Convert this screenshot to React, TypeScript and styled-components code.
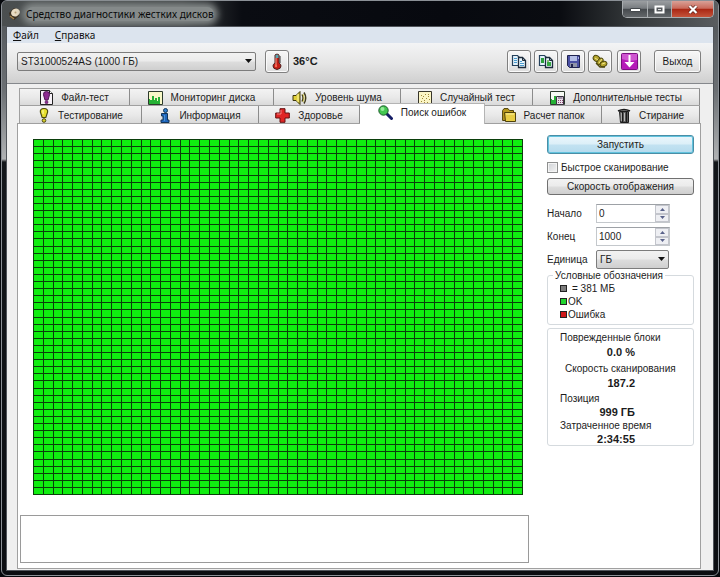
import React, { useState } from "react";
import styled, { createGlobalStyle, css } from "styled-components";

const GlobalStyle = createGlobalStyle`
  *, *::before, *::after { box-sizing: border-box; }
  html, body { margin: 0; padding: 0; background: #07090d; }
  body, button, input, select, legend {
    font-family: "Liberation Sans", Arial, sans-serif;
    font-size: 10px;
    color: #1c1c1c;
  }
`;

const Desktop = styled.div`
  display: flex;
  min-height: 100vh;
  padding: 0 1px 1px;
`;

const Window = styled.div`
  flex: 1;
  display: flex;
  flex-direction: column;
  min-width: 0;
  padding: 0 4px 4px;
  border: 1px solid #8b9096;
  border-radius: 6px;
  background: linear-gradient(#4e5256 0, #6c7074 90px, #b0b2b4 158px, #14171b 161px, #0b0d11 100%);
`;

const TitleBar = styled.header`
  display: flex;
  align-items: flex-start;
  height: 25px;
  margin: 0 -4px;
  padding-left: 7px;
  border-radius: 5px 5px 0 0;
  background: linear-gradient(90deg, #4b4f50 0, #3a3e3f 180px, #0a0c12 240px, #07090f 62%, #0a0c11 78%, #34383a 88%, #5a5d60 100%);
`;

const Title = styled.h1`
  flex: 1;
  display: flex;
  align-items: center;
  gap: 5px;
  height: 25px;
  margin: 0;
  font: 400 10px/14px "Noto Sans", "Open Sans", sans-serif;
  color: #0a0a0a;
`;

const TitleText = styled.span`
  white-space: nowrap;
  background: #858a8a;
  border-radius: 8px;
  box-shadow: 0 0 7px 4px #858a8a;
`;

const Caption = styled.div`
  display: flex;
  height: 17px;
  margin-right: 4px;
  border: 1px solid #a9adb0;
  border-top: 0;
  border-radius: 0 0 5px 5px;
  overflow: hidden;
`;

const CaptionButton = styled.button<{ $close?: boolean }>`
  display: flex;
  align-items: center;
  justify-content: center;
  width: ${(p) => (p.$close ? 42 : 24)}px;
  padding: 0;
  border: 0;
  background: ${(p) =>
    p.$close
      ? "linear-gradient(#d9a197 0, #c9695a 46%, #a92613 50%, #c4533a 100%)"
      : "linear-gradient(#9b9ea1 0, #777b7f 46%, #45494d 50%, #63676a 100%)"};
  & + & { border-left: 1px solid #a9adb0; }
`;

const Client = styled.div`
  flex: 1;
  display: flex;
  flex-direction: column;
  border: 1px solid #50545a;
  background: #f0f0f0;
`;

const MenuBar = styled.nav`
  display: flex;
  gap: 16px;
  height: 16px;
  padding-left: 6px;
  background: #dce4ee;
`;

const MenuItem = styled.button`
  padding: 0;
  border: 0;
  background: none;
  font: 400 10px/16px "Noto Sans", "Open Sans", sans-serif;
  color: #111;
`;

const Toolbar = styled.div`
  display: flex;
  align-items: center;
  height: 41px;
  padding: 0 12px 4px 10px;
  border-bottom: 1px solid #85888c;
  background: linear-gradient(#f3f4f5, #e6e6e6 50%, #cfcfcf);
`;

const SelectBox = styled.div<{ $width: number }>`
  position: relative;
  width: ${(p) => p.$width}px;
  height: 19px;
  & > svg {
    position: absolute;
    right: 4px;
    top: 7px;
    pointer-events: none;
  }
`;

const Select = styled.select`
  appearance: none;
  width: 100%;
  height: 100%;
  padding: 0 14px 0 3px;
  border: 1px solid #7c7c7c;
  border-radius: 2px;
  background: linear-gradient(#f2f2f2 0, #ebebeb 48%, #dddddd 52%, #cfcfcf 100%);
`;

const ToolButton = styled.button<{ $wide?: boolean }>`
  display: flex;
  align-items: center;
  justify-content: center;
  width: ${(p) => (p.$wide ? 47 : 24)}px;
  height: 23px;
  padding: 0;
  border: 1px solid #808080;
  border-radius: 3px;
  background: linear-gradient(#f7f7f7, #ececec 50%, #dcdcdc);
  box-shadow: inset 0 0 0 1px #fafafa;
`;

const Temperature = styled.span`
  flex: 1;
  margin-left: 4px;
  font-size: 11px;
  font-weight: 700;
`;

const ToolGroup = styled.div`
  display: flex;
  gap: 3px;
`;

const Spacer = styled.span<{ $w: number }>`
  flex: none;
  width: ${(p) => p.$w}px;
`;

const Body = styled.main`
  flex: 1;
  display: flex;
  flex-direction: column;
  padding: 4px 12px 1px 10px;
  background: #efefef;
`;

const TabRow = styled.div<{ $cols: string }>`
  display: grid;
  grid-template-columns: ${(p) => p.$cols};
  height: 18px;
  margin: 0 1px 0 2px;
  border-top: 1px solid #a0a0a0;
  border-left: 1px solid #a0a0a0;
  & + & { margin-top: -1px; }
`;

const Tab = styled.button<{ $active?: boolean }>`
  display: flex;
  align-items: center;
  justify-content: center;
  gap: 8px;
  min-width: 0;
  padding: 0;
  white-space: nowrap;
  border: 0;
  border-right: 1px solid #8c8c8c;
  background: linear-gradient(#f3f3f3, #e9e9e9 50%, #d8d8d8);
  ${(p) =>
    p.$active &&
    css`
      z-index: 1;
      height: 21px;
      margin-top: -3px;
      padding-bottom: 3px;
      border-top: 1px solid #a0a0a0;
      border-color: #b4b4b4;
      background: #fff;
    `}
`;

const Panel = styled.section`
  flex: 1;
  display: grid;
  grid-template-columns: minmax(0, 1fr) 147px;
  gap: 18px;
  padding: 11px 6px 5px 2px;
  border: 1px solid #a0a0a0;
  background: #fff;
`;

const ScanColumn = styled.div`
  display: flex;
  flex-direction: column;
  gap: 20px;
`;

const MapFrame = styled.div`
  flex: 1;
  display: flex;
  min-height: 200px;
  margin: 4px 6px 0 13px;
  border: 1px solid #0b3f0b;
  border-width: 0 1px 1px 0;
  & > svg { flex: 1; min-width: 0; }
`;

const Log = styled.div`
  height: 48px;
  border: 1px solid #9a9a9a;
`;

const Side = styled.aside`
  display: flex;
  flex-direction: column;
`;

const PushButton = styled.button<{ $primary?: boolean }>`
  height: ${(p) => (p.$primary ? 19 : 17)}px;
  padding: 0;
  border: 1px solid #707070;
  border-radius: 3px;
  background: linear-gradient(#f2f2f2 0, #ebebeb 48%, #dddddd 52%, #cfcfcf 100%);
  ${(p) =>
    p.$primary &&
    css`
      border: 1px solid #4a8ea6;
      box-shadow: inset 0 0 0 1px #62c3de;
      background: linear-gradient(#eaf6fc 0, #dceff8 48%, #c2e2f1 52%, #b5dbee 100%);
    `}
`;

const CheckRow = styled.label`
  display: flex;
  align-items: center;
  gap: 3px;
  height: 14px;
  margin: 6px 0 4px;
  white-space: nowrap;
`;

const CheckBox = styled.input`
  appearance: none;
  width: 11px;
  height: 11px;
  margin: 0;
  border: 1px solid #8e8f8f;
  background: linear-gradient(135deg, #cfd2d6, #f4f4f4);
  box-shadow: inset 0 0 0 1px #f4f4f4;
  &:checked { background: #3b6ea5; }
`;

const Fields = styled.div`
  display: grid;
  grid-template-columns: 49px 74px;
  row-gap: 4px;
  align-items: center;
  margin-top: 9px;
`;

const SpinBox = styled.div`
  display: flex;
  height: 19px;
  border: 1px solid #c4c8cc;
  border-top-color: #9da1a6;
`;

const SpinInput = styled.input`
  flex: 1;
  min-width: 0;
  padding: 0 2px;
  border: 0;
  background: #fff;
  outline: 0;
`;

const SpinButtons = styled.div`
  display: grid;
  width: 14px;
`;

const SpinButton = styled.button`
  display: flex;
  align-items: center;
  justify-content: center;
  padding: 0;
  border: 1px solid #c3c5cc;
  background: #eeeff3;
`;

const Legend = styled.fieldset`
  margin: 0;
  padding: 0 0 3px 12px;
  border: 1px solid #d5dade;
  border-radius: 3px;
  & > legend {
    margin-left: -7px;
    padding: 0 2px;
    line-height: 13px;
  }
`;

const LegendItem = styled.div<{ $gap?: boolean }>`
  display: flex;
  align-items: center;
  gap: ${(p) => (p.$gap ? 5 : 1)}px;
  height: 13px;
  line-height: 13px;
`;

const Swatch = styled.span<{ $color: string }>`
  width: 7px;
  height: 7px;
  border: 1px solid #222;
  background: ${(p) => p.$color};
`;

const Stats = styled.dl`
  margin: 3px 0 0;
  padding: 1px 0 0;
  border: 1px solid #d5dade;
  border-radius: 3px;
`;

const Stat = styled.div<{ $tight?: boolean; $indent?: boolean }>`
  padding: 0 58px 1px ${(p) => (p.$indent ? 17 : 12)}px;
  &:last-child { padding-bottom: 0; }
  dt {
    line-height: ${(p) => (p.$tight ? 14 : 15)}px;
    white-space: nowrap;
  }
  dd {
    margin: 0;
    line-height: ${(p) => (p.$tight ? 12 : 15)}px;
    font-size: 11px;
    font-weight: 700;
    text-align: right;
    white-space: nowrap;
  }
`;

const Arrow = () => (
  <svg width="7" height="4" viewBox="0 0 7 4" aria-hidden="true">
    <path d="M0 0h7L3.500 4z" fill="#111" />
  </svg>
);

const DiskIcon = () => (
  <svg width="12" height="12" viewBox="0 0 12 12" aria-hidden="true">
    <path d="M0 5 5 0l6 2-1 6-5 4-4-3z" fill="#3a2f22" />
    <ellipse cx="6.500" cy="4.500" rx="4.500" ry="3.800" fill="#e9dcc4" transform="rotate(-25 6.500 4.500)" />
    <circle cx="6.500" cy="4.500" r="1" fill="#b39c74" />
    <path d="M1 8l4 3" stroke="#a5834d" strokeWidth="1.500" />
  </svg>
);

const ThermometerIcon = () => (
  <svg width="12" height="17" viewBox="0 0 12 17" aria-hidden="true">
    <path d="M4 2q2-2 4 0v8q2 1 2 3 0 3-4 3.500Q2 16 2 13q0-2 2-3z" fill="#c51d14" stroke="#4b2020" />
    <path d="M4.500 2q1.500-1 3 0v3h-3z" fill="#5aa5b0" />
    <path d="M5 5v7" stroke="#f0a090" />
    <path d="M9 3v7" stroke="#333" />
    <circle cx="5" cy="13" r="1.200" fill="#f26a58" />
  </svg>
);

const CopyIcon = ({ green }: { green?: boolean }) => (
  <svg width="16" height="15" viewBox="0 0 16 15" aria-hidden="true">
    <path d="M1.500 1.500h5l2 2v8h-7z" fill="#e2f1fa" stroke="#25415c" strokeWidth="1.200" />
    <path d="M7.500 3.500h4l3 3v7h-7z" fill="#eaf6fc" stroke="#1d2c3c" strokeWidth="1.300" />
    <path d="M11.500 3.500v3h3" fill="none" stroke="#1d2c3c" />
    {green ? (
      <>
        <path d="M3 4h3v5H3z" fill="#2b9f3c" />
        <path d="M9 8h4v4H9z" fill="#35a843" />
        <path d="M9 6h2v2H9z" fill="#87ba78" />
      </>
    ) : (
      <path d="M3 4.500h3M3 6.500h3M3 8.500h3M9 7.500h2M9 9.500h4M9 11.500h4" stroke="#4a9bce" />
    )}
  </svg>
);

const SaveIcon = () => (
  <svg width="15" height="15" viewBox="0 0 15 15" aria-hidden="true">
    <path d="M1.500 1.500h12v12h-10l-2-2z" fill="#4a50a3" stroke="#20234f" />
    <path d="M4 2h7v5H4z" fill="#b5bfe6" />
    <path d="M4 9h7v4H4z" fill="#8f94a8" />
    <path d="M5 10h2v3H5z" fill="#20234f" />
    <path d="M12.500 3v2" stroke="#a9afe5" />
  </svg>
);

const ChainIcon = () => (
  <svg width="16" height="15" viewBox="0 0 16 15" aria-hidden="true">
    <g stroke="#4d470c" strokeWidth="1" fill="#b5a52c">
      <ellipse cx="4.500" cy="4.500" rx="3.500" ry="2.800" transform="rotate(35 4.500 4.500)" />
      <ellipse cx="8" cy="7.500" rx="3.800" ry="2.400" transform="rotate(-50 8 7.500)" />
      <ellipse cx="11.500" cy="10" rx="3.500" ry="2.600" transform="rotate(-20 11.500 10)" />
    </g>
    <path d="M3 4l3 2M7 9l3-4M10 10l3-1" stroke="#f1e68a" />
    <path d="M4 9l4 4 5 0" fill="none" stroke="#4d470c" strokeWidth="1.300" />
  </svg>
);

const DownIcon = () => (
  <svg width="17" height="17" viewBox="0 0 17 17" aria-hidden="true">
    <rect x=".5" y=".5" width="16" height="16" rx="1" fill="#b51cb8" stroke="#7a0f80" />
    <path d="M1 1h15v6Q8 9 1 6z" fill="#cf55d0" />
    <path d="M8.500 2v9" stroke="#fff" strokeWidth="2" />
    <path d="M3.500 9h10l-5 5.500z" fill="#fff" />
  </svg>
);

const exclamationPath = "M6 0Q9.500 0 9 3.500L7.500 9h-3L3 3.500Q2.500 0 6 0z";

const FileTestIcon = () => (
  <svg width="13" height="15" viewBox="0 0 13 15" aria-hidden="true">
    <path d="M.5.5h9l3 3v11H.5z" fill="#f7f2f8" stroke="#222" />
    <path d="M9.500.5v3h3" fill="#fff" stroke="#222" />
    <path d={exclamationPath} transform="translate(.5 1.500) scale(1 .95)" fill="#8d2b91" stroke="#4c1551" />
    <circle cx="6.500" cy="12.200" r="1.500" fill="#8d2b91" stroke="#4c1551" strokeWidth=".6" />
  </svg>
);

const ChartIcon = ({ calc }: { calc?: boolean }) => (
  <svg width="15" height="14" viewBox="0 0 15 14" aria-hidden="true">
    <path d="M.5.5h14v13H.5z" fill={calc ? "#f7fbf4" : "#f8f8c8"} stroke="#2c3a2c" />
    <path d="M1 13V8h1v1h2V5h2v4h1V7h2v3h1V6h2v7z" fill="#25b135" />
    {calc && (
      <>
        <path d="M6.500 5.500h7v8h-7z" fill="#e9dfe9" stroke="#3a3340" />
        <path d="M8 7h4.500" stroke="#5a4a66" />
        <path d="M8 9.500h5M8 11.500h5" stroke="#8a4a70" strokeDasharray="1 1" />
      </>
    )}
  </svg>
);

const SpeakerIcon = () => (
  <svg width="15" height="14" viewBox="0 0 15 14" aria-hidden="true">
    <path d="M1 4.500h3l4-4v13l-4-4H1z" fill="#e0cf3a" stroke="#3c370c" />
    <path d="M6 3v8" stroke="#fff8a0" />
    <path d="M10 3.500q2 3.500 0 7M12 1.500q3.500 5.500 0 11" fill="none" stroke="#3f3b1c" strokeWidth="1.400" />
    <path d="M11 3q2.500 4 0 8" fill="none" stroke="#d9c93d" strokeWidth=".8" />
  </svg>
);

const RandomIcon = () => (
  <svg width="14" height="14" viewBox="0 0 14 14" aria-hidden="true">
    <path d="M.5.5h13v13H.5z" fill="#fbf5c4" stroke="#37352a" />
    <path d="M3 4.500h1M7 3.500h1M10 5.500h1M4 7.500h1M8 7.500h1M11 8.500h1M3 10.500h1M6 9.500h1M9 11.500h1M6 11.500h1M5 5.500h1M10 3.500h1" stroke="#a08a3a" />
  </svg>
);

const TestIcon = () => (
  <svg width="12" height="15" viewBox="0 0 12 15" aria-hidden="true">
    <path d={exclamationPath} transform="translate(-1.200 .6) scale(1.200 1)" fill="#e6e02c" stroke="#4d4a10" />
    <path d="M5 2v4" stroke="#fdfbb4" />
    <circle cx="6" cy="12.500" r="1.800" fill="#d8d02a" stroke="#4d4a10" />
  </svg>
);

const InfoIcon = () => (
  <svg width="12" height="15" viewBox="0 0 12 15" aria-hidden="true">
    <circle cx="6.500" cy="2.500" r="2" fill="#2f7fd0" stroke="#123559" />
    <path d="M2.500 5.500h6v6.500h1.500v2.500h-8V12H4V8H2.500z" fill="#1f66bd" stroke="#123559" />
    <path d="M5.500 7v6" stroke="#4a92d6" />
  </svg>
);

const HealthIcon = () => (
  <svg width="15" height="15" viewBox="0 0 15 15" aria-hidden="true">
    <path d="M5 .7h5V5h4.300v5H10v4.300H5V10H.7V5H5z" fill="#e02626" stroke="#641010" />
    <path d="M6 2v4H2" fill="none" stroke="#f58080" />
  </svg>
);

const SearchIcon = () => (
  <svg width="15" height="15" viewBox="0 0 15 15" aria-hidden="true">
    <path d="M8.500 8.500l5 5" stroke="#141c66" strokeWidth="3" strokeLinecap="round" />
    <circle cx="5.500" cy="5.500" r="4.700" fill="#43c750" stroke="#1c5a2a" />
    <circle cx="4.500" cy="4" r="2" fill="#93eb98" />
  </svg>
);

const FolderIcon = () => (
  <svg width="14" height="14" viewBox="0 0 14 14" aria-hidden="true">
    <path d="M.6 2.500 2 .6h4l1.500 1.900h4v10H.6z" fill="#b99a1e" stroke="#4f410b" />
    <path d="M2.500 4.500h11v9h-10z" fill="#e7cd45" stroke="#4f410b" />
    <path d="M4 6h8" stroke="#fbf0a0" />
  </svg>
);

const TrashIcon = () => (
  <svg width="14" height="15" viewBox="0 0 14 15" aria-hidden="true">
    <path d="M2.500 3.500h9v11h-8z" fill="#666" stroke="#1c1c1c" />
    <path d="M1 3q6-3 12 0" fill="#888" stroke="#1c1c1c" strokeWidth="1.500" />
    <path d="M5.500 4v10M9.500 4v10" stroke="#1c1c1c" strokeWidth="1.400" />
    <path d="M4.300 5v8M7.500 5v8" stroke="#b9b9b9" />
  </svg>
);

const COLS = 50;
const ROWS = 50;
const range = (n: number) => Array.from({ length: n }, (_, i) => i);

const BlockMap = () => (
  <svg role="img" aria-label="Карта блоков">
    <rect width="100%" height="100%" fill="#10ee10" />
    <g fill="#0b3f0b" shapeRendering="crispEdges">
      {range(COLS).map((i) => (
        <rect key={`c${i}`} x={`${(i * 100) / COLS}%`} width="1" height="100%" />
      ))}
      {range(ROWS).map((i) => (
        <rect key={`r${i}`} y={`${(i * 100) / ROWS}%`} width="100%" height="1" />
      ))}
    </g>
  </svg>
);

const topTabs = [
  { label: "Файл-тест", icon: <FileTestIcon /> },
  { label: "Мониторинг диска", icon: <ChartIcon /> },
  { label: "Уровень шума", icon: <SpeakerIcon /> },
  { label: "Случайный тест", icon: <RandomIcon /> },
  { label: "Дополнительные тесты", icon: <ChartIcon calc /> },
];

const bottomTabs = [
  { label: "Тестирование", icon: <TestIcon /> },
  { label: "Информация", icon: <InfoIcon /> },
  { label: "Здоровье", icon: <HealthIcon /> },
  { label: "Поиск ошибок", icon: <SearchIcon />, active: true },
  { label: "Расчет папок", icon: <FolderIcon /> },
  { label: "Стирание", icon: <TrashIcon /> },
];

const stats = [
  { label: "Поврежденные блоки", value: "0.0 %" },
  { label: "Скорость сканирования", value: "187.2", indent: true },
  { label: "Позиция", value: "999 ГБ", tight: true },
  { label: "Затраченное время", value: "2:34:55", tight: true },
];

const Spin = ({ id, initial }: { id: string; initial: number }) => {
  const [value, setValue] = useState(initial);
  return (
    <SpinBox>
      <SpinInput id={id} value={value} onChange={(e) => setValue(Number(e.target.value) || 0)} />
      <SpinButtons>
        <SpinButton type="button" aria-label="Больше" onClick={() => setValue(value + 1)}>
          <svg width="5" height="3" viewBox="0 0 5 3"><path d="M0 3h5L2.500 0z" fill="#59628a" /></svg>
        </SpinButton>
        <SpinButton type="button" aria-label="Меньше" onClick={() => setValue(value - 1)}>
          <svg width="5" height="3" viewBox="0 0 5 3"><path d="M0 0h5L2.500 3z" fill="#59628a" /></svg>
        </SpinButton>
      </SpinButtons>
    </SpinBox>
  );
};

export default function App() {
  return (
    <>
      <GlobalStyle />
      <Desktop>
        <Window>
          <TitleBar>
            <Title>
              <DiskIcon />
              <TitleText>Средство диагностики жестких дисков</TitleText>
            </Title>
            <Caption>
              <CaptionButton aria-label="Свернуть">
                <svg width="11" height="5" viewBox="0 0 11 5"><path d="M.5 1.500h10v3H.5z" fill="#fff" stroke="#44484c" /></svg>
              </CaptionButton>
              <CaptionButton aria-label="Развернуть">
                <svg width="11" height="9" viewBox="0 0 11 9"><path d="M1.500 1.500h8v6h-8z" fill="#55595d" stroke="#fff" strokeWidth="2" /><path d="M4 4h3v1H4z" fill="#ddd" /></svg>
              </CaptionButton>
              <CaptionButton $close aria-label="Закрыть">
                <svg width="10" height="9" viewBox="0 0 10 9"><path d="M1.500 1l7 7M8.500 1l-7 7" stroke="#5a2018" strokeWidth="3.500" /><path d="M1.500 1l7 7M8.500 1l-7 7" stroke="#fff" strokeWidth="2.200" /></svg>
              </CaptionButton>
            </Caption>
          </TitleBar>
          <Client>
            <MenuBar>
              <MenuItem><u>Ф</u>айл</MenuItem>
              <MenuItem><u>С</u>правка</MenuItem>
            </MenuBar>
            <Toolbar>
              <SelectBox $width={239}>
                <Select aria-label="Диск"><option>ST31000524AS (1000 ГБ)</option></Select>
                <Arrow />
              </SelectBox>
              <Spacer $w={9} />
              <ToolButton aria-label="Температура"><ThermometerIcon /></ToolButton>
              <Temperature>36°C</Temperature>
              <ToolGroup>
                <ToolButton aria-label="Копировать текст"><CopyIcon /></ToolButton>
                <ToolButton aria-label="Копировать снимок"><CopyIcon green /></ToolButton>
                <ToolButton aria-label="Сохранить"><SaveIcon /></ToolButton>
                <ToolButton aria-label="Параметры"><ChainIcon /></ToolButton>
              </ToolGroup>
              <Spacer $w={5} />
              <ToolButton aria-label="Вниз"><DownIcon /></ToolButton>
              <Spacer $w={13} />
              <ToolButton $wide>Выход</ToolButton>
            </Toolbar>
            <Body>
              <TabRow role="tablist" $cols="110fr 144fr 127fr 132fr 167fr">
                {topTabs.map((t) => (
                  <Tab key={t.label} role="tab" aria-selected={false}>{t.icon}{t.label}</Tab>
                ))}
              </TabRow>
              <TabRow role="tablist" $cols="122fr 117fr 101fr 125fr 117fr 98fr">
                {bottomTabs.map((t) => (
                  <Tab key={t.label} role="tab" aria-selected={!!t.active} $active={t.active}>{t.icon}{t.label}</Tab>
                ))}
              </TabRow>
              <Panel>
                <ScanColumn>
                  <MapFrame><BlockMap /></MapFrame>
                  <Log role="log" />
                </ScanColumn>
                <Side>
                  <PushButton $primary>Запустить</PushButton>
                  <CheckRow><CheckBox type="checkbox" />Быстрое сканирование</CheckRow>
                  <PushButton>Скорость отображения</PushButton>
                  <Fields>
                    <label htmlFor="from">Начало</label>
                    <Spin id="from" initial={0} />
                    <label htmlFor="to">Конец</label>
                    <Spin id="to" initial={1000} />
                    <label htmlFor="unit">Единица</label>
                    <SelectBox $width={73}>
                      <Select id="unit"><option>ГБ</option></Select>
                      <Arrow />
                    </SelectBox>
                  </Fields>
                  <Legend>
                    <legend>Условные обозначения</legend>
                    <LegendItem $gap><Swatch $color="#7c7c7c" />= 381 МБ</LegendItem>
                    <LegendItem><Swatch $color="#21d52f" />OK</LegendItem>
                    <LegendItem><Swatch $color="#d01818" />Ошибка</LegendItem>
                  </Legend>
                  <Stats>
                    {stats.map((s) => (
                      <Stat key={s.label} $tight={s.tight} $indent={s.indent}>
                        <dt>{s.label}</dt>
                        <dd>{s.value}</dd>
                      </Stat>
                    ))}
                  </Stats>
                </Side>
              </Panel>
            </Body>
          </Client>
        </Window>
      </Desktop>
    </>
  );
}
